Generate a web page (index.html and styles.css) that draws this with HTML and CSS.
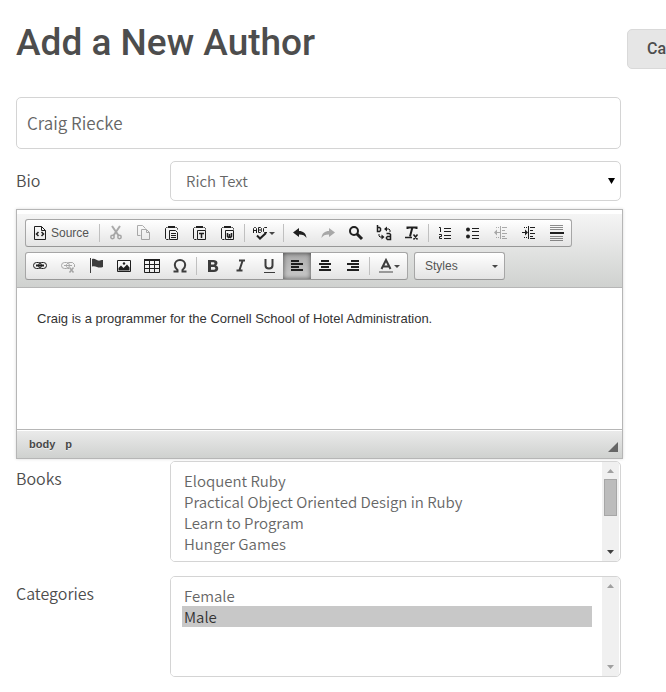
FILE: index.html
```html
<!DOCTYPE html>
<html lang="en">
<head>
<meta charset="utf-8">
<title>Add a New Author</title>
<link rel="stylesheet" href="styles.css">
</head>
<body>
<main class="page">
  <header class="page-header">
    <h1>Add a New Author</h1>
    <button class="cancel" type="button">Cancel</button>
  </header>
  <form class="author-form">
    <input class="field name-field" type="text" value="Craig Riecke" aria-label="Name">
    <div class="row bio-row">
      <label for="format">Bio</label>
      <div class="select-wrap">
        <select id="format" class="field format"><option>Rich Text</option></select>
        <svg class="caret" width="7" height="6" viewBox="0 0 7 6"><path d="M0 0h7L3.500 6z"/></svg>
      </div>
    </div>

    <section class="editor" aria-label="Bio editor">
      <div class="toolbar">
        <div class="group">
          <button type="button" class="tool source"><svg viewBox="0 0 16 16"><path d="M2.500 1.500h7l4 4v9h-11zM9.500 1.500v4h4" class="line"/><path d="M6.500 7L4.500 9l2 2M9.500 7l2 2-2 2" class="bold"/></svg><span>Source</span></button>
          <i class="sep"></i>
          <button type="button" class="tool off" title="Cut"><svg viewBox="0 0 16 16"><path d="M4 1l6.500 9.500M12 1L5.500 10.500" class="heavy"/><circle cx="4.500" cy="12" r="1.700" class="bold"/><circle cx="11.500" cy="12" r="1.700" class="bold"/></svg></button>
          <button type="button" class="tool off" title="Copy"><svg viewBox="0 0 16 16"><path d="M4.500 10.500h-3v-10h5l3 3M5.500 4.500h5l3 3v7h-8zM10.500 4.500v3h3" class="line"/></svg></button>
          <button type="button" class="tool" title="Paste"><svg viewBox="0 0 16 16"><path d="M3.500 2.500h-1l-1 1v10l1 1h2M11.500 2.500h1l1 1v1" class="line"/><path d="M4 1h7v2H4z"/><path d="M5.500 5.500h6l2 2v7h-8zM7 8.500h5M7 10.500h5M7 12.500h5" class="line"/></svg></button>
          <button type="button" class="tool" title="Paste as plain text"><svg viewBox="0 0 16 16"><path d="M3.500 2.500h-1l-1 1v10l1 1h2M11.500 2.500h1l1 1v1" class="line"/><path d="M4 1h7v2H4z"/><path d="M5.500 5.500h8v9h-8z" class="line"/><path d="M7 8.500h5M9.500 8v5" class="bold"/></svg></button>
          <button type="button" class="tool" title="Paste from Word"><svg viewBox="0 0 16 16"><path d="M3.500 2.500h-1l-1 1v10l1 1h2M11.500 2.500h1l1 1v1" class="line"/><path d="M4 1h7v2H4z"/><path d="M5.500 5.500h8v9h-8z" class="line"/><path d="M7.500 8v3.500l1 1 1-1V9v2.500l1 1 1-1V8" class="bold"/></svg></button>
          <i class="sep"></i>
          <button type="button" class="tool menu" title="Spell check"><svg viewBox="0 0 16 16"><path d="M.5 8V3.500l1-1h1l1 1V8M1 5.500h2M5.500 7.500v-5h2l1 1v1l-1 .5 1 .5v1l-1 1zM5.500 5h2M14 2.500h-2.500l-1 1v3l1 1H14" class="line"/><path d="M4 10.500l3 3L13 8" class="heavy"/></svg><svg class="arrow" viewBox="0 0 6 3"><path d="M0 0h6L3 3z"/></svg></button>
          <i class="sep"></i>
          <button type="button" class="tool" title="Undo"><svg viewBox="0 0 16 16"><path d="M1 7.500L7 3v3c4 0 7 2 7.500 7C13 10.500 11 9.500 7 9.500V12z"/></svg></button>
          <button type="button" class="tool off" title="Redo"><svg viewBox="0 0 16 16"><path d="M15 7.500L9 3v3c-4 0-7 2-7.500 7C3 10.500 5 9.500 9 9.500V12z"/></svg></button>
          <button type="button" class="tool" title="Find"><svg viewBox="0 0 16 16"><circle cx="6" cy="6" r="4" class="heavy"/><path d="M9 9l5 5" class="thick"/></svg></button>
          <button type="button" class="tool" title="Replace"><svg viewBox="0 0 16 16"><path d="M1.500 0v6.500h2l1-1v-2l-1-1H2M10.500 8.500h3l1 1v5h-3l-1-1v-1l1-1h3" class="bold"/><path d="M10 4h3l1 1v2M6 12H4l-1-1V9" class="line"/><path d="M8 4l3-2.500v5zM8.500 12l-3-2.500v5z"/></svg></button>
          <button type="button" class="tool" title="Remove format"><svg viewBox="0 0 16 16"><path d="M3.500 4V2.500h9V4M8.500 2L6 11.500" class="heavy"/><path d="M1 12.500h7M9.500 9.500l4 5M13.500 9.500l-4 5" class="bold"/></svg></button>
          <i class="sep"></i>
          <button type="button" class="tool" title="Numbered list"><svg viewBox="0 0 16 16"><path d="M2 2.500h1.500V7M2 9.500h2.500v2h-2v2H5" class="line"/><path d="M7 3.500h7M7 6.500h7M7 10.500h7M7 13.500h7" class="line"/></svg></button>
          <button type="button" class="tool" title="Bulleted list"><svg viewBox="0 0 16 16"><circle cx="3" cy="4.500" r="2"/><circle cx="3" cy="11.500" r="2"/><path d="M7 3.500h7M7 6.500h7M7 10.500h7M7 13.500h7" class="line"/></svg></button>
          <button type="button" class="tool off" title="Decrease indent"><svg viewBox="0 0 16 16"><path d="M7.500 1v13M9 2.500h5M9 5.500h3M9 8.500h5M9 11.500h3M9 13.500h5M3 7.500h4M3 2.500h1M5 2.500h1M3 12.500h1M5 12.500h1" class="line"/><path d="M1 7.500l3-3v6z"/></svg></button>
          <button type="button" class="tool" title="Increase indent"><svg viewBox="0 0 16 16"><path d="M7.500 1v13M9 2.500h5M9 5.500h3M9 8.500h5M9 11.500h3M9 13.500h5M1 7.500h4M3 2.500h1M5 2.500h1M3 12.500h1M5 12.500h1" class="line"/><path d="M7 7.500l-3-3v6z"/></svg></button>
          <button type="button" class="tool" title="Page break"><svg viewBox="0 0 16 16"><path d="M1 .5h13M1 2.500h13M1 4.500h13M1 11.500h13M1 13.500h13M1 15.500h13" class="line soft"/><path d="M1 7h14v2H1z"/></svg></button>
        </div>
        <div class="group">
          <button type="button" class="tool" title="Link"><svg viewBox="0 0 16 16"><rect x="1.500" y="4.500" width="8" height="6" rx="3" class="line"/><rect x="6.500" y="4.500" width="8" height="6" rx="3" class="line"/><path d="M4 7.500h8" class="heavy"/></svg></button>
          <button type="button" class="tool off" title="Unlink"><svg viewBox="0 0 16 16"><rect x="1.500" y="4.500" width="8" height="6" rx="3" class="line"/><path d="M9 10.500H8l-1.500-2v-2l2-2h4l2 2V9M4 7.500h8" class="line"/><path d="M9.500 9.500l4 5M13.500 9.500l-4 5" class="bold"/></svg></button>
          <button type="button" class="tool dark" title="Anchor"><svg viewBox="0 0 16 16"><path d="M2.500 0v15" class="line"/><path d="M4 1c3-1 4 1 6 1.500 1.500.5 3-.5 5-.5v7c-2 .5-4 1-6 0-2-.8-3-1-5-.5z"/></svg></button>
          <button type="button" class="tool" title="Image"><svg viewBox="0 0 16 16"><path d="M1.500 2.500h13v11h-13z" class="line"/><path d="M2.500 12.500V10L5 7.500 7.500 10 11 6.500l2.500 3v3z"/><circle cx="8" cy="5.500" r="1.200"/></svg></button>
          <button type="button" class="tool" title="Table"><svg viewBox="0 0 16 16"><path d="M.5 1.500h15v13H.5zM.5 6.500h15M.5 10.500h15M5.500 3v12M10.500 3v12" class="line"/><path d="M0 1h16v2H0z"/></svg></button>
          <button type="button" class="tool dark" title="Special character"><svg viewBox="0 0 16 16"><path d="M1.500 13.500h4V12C3.500 10.500 2.800 9 2.800 7c0-3 2.200-5 5.200-5s5.200 2 5.200 5c0 2-.7 3.500-2.700 5v1.500h4" class="heavy"/></svg></button>
          <i class="sep"></i>
          <button type="button" class="tool dark" title="Bold"><svg viewBox="0 0 16 16"><path d="M3 2h5.500c4.500 0 5 4 2.500 5.500 3.500 1 3 6.500-2 6.500H3zM6 4.200v2.300h2c2 0 2-2.300 0-2.300zM6 9v2.800h2.500c2.500 0 2.500-2.800 0-2.800z" fill-rule="evenodd"/></svg></button>
          <button type="button" class="tool dark" title="Italic"><svg viewBox="0 0 16 16"><path d="M6 2.500h6M3.500 12.500h6M9.500 3L6.500 12" class="heavy"/></svg></button>
          <button type="button" class="tool dark" title="Underline"><svg viewBox="0 0 16 16"><path d="M4.500 1v6.500c0 4 7 4 7 0V1" class="heavy"/><path d="M3 14.500h11" class="line"/></svg></button>
          <button type="button" class="tool on" title="Align left"><svg viewBox="0 0 16 16"><path d="M2 3h8M2 6h12M2 9h8M2 12h12" class="bar"/></svg></button>
          <button type="button" class="tool" title="Center"><svg viewBox="0 0 16 16"><path d="M4 3h8M2 6h12M4 9h8M2 12h12" class="bar"/></svg></button>
          <button type="button" class="tool" title="Align right"><svg viewBox="0 0 16 16"><path d="M6 3h8M2 6h12M6 9h8M2 12h12" class="bar"/></svg></button>
          <i class="sep"></i>
          <button type="button" class="tool menu color dark" title="Text color"><svg viewBox="0 0 16 16"><path d="M3.500 11L8 2l4.500 9M5.500 8.500h5" class="heavy"/><path d="M1 13h14v2H1z" class="swatch"/></svg><svg class="arrow" viewBox="0 0 6 3"><path d="M0 0h6L3 3z"/></svg></button>
        </div>
        <button type="button" class="combo"><span>Styles</span><svg class="arrow" viewBox="0 0 6 3"><path d="M0 0h6L3 3z"/></svg></button>
      </div>
      <div class="content" contenteditable="true" role="textbox" aria-label="Bio text"><p>Craig is a programmer for the Cornell School of Hotel Administration.</p></div>
      <footer class="statusbar">
        <a href="#body">body</a><a href="#p">p</a>
        <svg class="resizer" width="10" height="10" viewBox="0 0 10 10"><path d="M10 0v10H0z"/></svg>
      </footer>
    </section>

    <div class="row list-row">
      <label for="books">Books</label>
      <div class="listbox">
        <select id="books" multiple>
          <option>Eloquent Ruby</option>
          <option>Practical Object Oriented Design in Ruby</option>
          <option>Learn to Program</option>
          <option>Hunger Games</option>
        </select>
        <div class="scrollbar">
          <svg class="step idle" viewBox="0 0 7 4"><path d="M0 4h7L3.500 0z"/></svg>
          <div class="thumb"></div>
          <svg class="step" viewBox="0 0 7 4"><path d="M0 0h7L3.500 4z"/></svg>
        </div>
      </div>
    </div>
    <div class="row list-row">
      <label for="categories">Categories</label>
      <div class="listbox">
        <select id="categories" multiple>
          <option>Female</option>
          <option selected>Male</option>
        </select>
        <div class="scrollbar">
          <svg class="step idle" viewBox="0 0 7 4"><path d="M0 4h7L3.500 0z"/></svg>
          <svg class="step idle" viewBox="0 0 7 4"><path d="M0 0h7L3.500 4z"/></svg>
        </div>
      </div>
    </div>
  </form>
</main>
</body>
</html>
```

FILE: styles.css
```css
* { box-sizing: border-box; }

body {
  margin: 0;
  background: #fff;
  color: #4d4d4d;
  font-family: "Noto Sans CJK SC", "Open Sans", sans-serif;
  font-size: 16px;
  font-weight: 350;
  overflow-x: hidden;
}

.page { padding: 16px 45px 14px 16px; overflow: hidden; }

.page-header {
  display: flex;
  justify-content: space-between;
  align-items: flex-start;
  height: 81px;
  margin-right: -94px;
}

h1 {
  margin: 0;
  font: 500 37px/54px Roboto, sans-serif;
  white-space: nowrap;
}

.cancel {
  width: 88px;
  height: 40px;
  margin-top: 13px;
  padding: 0 19px;
  border: 1px solid #d9d9d9;
  border-radius: 5px;
  background: #e6e6e6;
  color: #4d4d4d;
  font: 500 16px/20px Roboto, sans-serif;
  text-align: left;
}

.field {
  display: block;
  width: 100%;
  border: 1px solid #d4d4d4;
  border-radius: 5px;
  background: #fff;
  color: #666;
  font-family: inherit;
  font-weight: inherit;
}

.name-field { height: 52px; padding: 0 10px 2px; font-size: 17px; }

.row {
  display: grid;
  grid-template-columns: 154px 1fr;
  align-items: start;
}

.row label { font-size: 16px; line-height: 24px; }

.bio-row { margin: 12px 0 8px; }
.bio-row label { padding-top: 7px; }

.select-wrap { position: relative; }

.format { appearance: none; height: 40px; padding: 0 15px 2px; font-size: 15px; }

.caret {
  position: absolute;
  right: 6px;
  top: 17px;
  fill: #000;
  pointer-events: none;
}

/* Rich text editor */
.editor {
  margin-right: -2px;
  border: 1px solid #b6b6b6;
  box-shadow: 0 0 3px rgba(0, 0, 0, .15);
  font-family: "Liberation Sans", Arial, sans-serif;
  background: #fff;
}

.toolbar {
  display: flex;
  flex-wrap: wrap;
  gap: 5px 6px;
  padding: 5px 8px 7px;
  border-top: 4px solid #fff;
  border-bottom: 1px solid #b6b6b6;
  background: linear-gradient(#f5f5f5, #cfd1cf) padding-box;
}

.group, .combo {
  display: flex;
  align-items: center;
  height: 28px;
  border: 1px solid #a6a6a6;
  border-bottom-color: #979797;
  border-radius: 3px;
  background: linear-gradient(#fff, #e4e4e4);
}

.tool {
  display: flex;
  align-items: center;
  width: 28px;
  height: 26px;
  padding: 0 6px;
  border: 0;
  background: none;
  color: #1f1f1f;
}

.tool svg { flex: none; width: 16px; height: 16px; }
.tool .arrow, .combo .arrow { width: 6px; height: 3px; color: #474747; }
.tool.menu { width: 34px; }
.tool.color { width: 35px; }
.tool.dark { color: #3c3c3c; }
.tool.off { opacity: .35; }

.tool.on {
  background: linear-gradient(#aaa, #cacaca);
  box-shadow: 0 0 5px rgba(0, 0, 0, .6) inset;
}

.tool.source { width: 71px; gap: 3px; }

.source span, .combo span {
  color: #545454;
  font: 12px/16px "Liberation Sans", Arial, sans-serif;
}

.combo { width: 91px; padding: 0 6px 0 10px; justify-content: space-between; }

.sep { width: 1px; height: 18px; margin: 0 2px; background: #c0c0c0; }

svg { display: block; fill: currentColor; }
.line, .bold, .heavy, .thick, .bar { fill: none; stroke: currentColor; stroke-width: 1px; }
.bold { stroke-width: 1.5px; }
.heavy { stroke-width: 2px; }
.thick { stroke-width: 3px; }
.bar { stroke-width: 2px; }
.soft { opacity: .5; }
.swatch { fill: #999; }

.content {
  min-height: 141px;
  padding: 21px 20px 20px;
  color: #333;
  font-size: 13px;
  font-weight: 400;
  line-height: 20px;
}

.content p { margin: 0; }

.statusbar {
  display: flex;
  align-items: center;
  gap: 10px;
  height: 29px;
  padding: 0 4px 0 12px;
  border-top: 1px solid #b6b6b6;
  background: linear-gradient(#ebebeb, #cfd1cf);
  box-shadow: 0 1px 0 #fff inset;
}

.statusbar a {
  color: #484848;
  font-size: 11px;
  font-weight: bold;
  text-decoration: none;
  text-shadow: 0 1px 0 rgba(255, 255, 255, .5);
}

.resizer { align-self: flex-end; margin: 0 0 6px auto; color: #666; }

/* List boxes */
.list-row { margin: 2px 0 14px; }
.list-row label { padding-top: 5px; }

.listbox {
  display: flex;
  height: 101px;
  padding-right: 1px;
  border: 1px solid #d4d4d4;
  border-radius: 5px;
  background: #fff;
  overflow: hidden;
}

.listbox select {
  flex: 1;
  height: 99px;
  padding: 8px 10px 7px 11px;
  border: 0;
  background: #fff;
  color: #666;
  font-family: inherit;
  font-size: 14px;
  overflow: hidden;
  outline: 0;
}

.listbox option {
  height: 21px;
  min-height: 21px;
  padding: 0 2px;
  font-size: 15px;
  font-weight: 350;
  line-height: 21px;
}

.listbox option:checked {
  background: linear-gradient(#c8c8c8, #c8c8c8);
  color: #333;
}

.scrollbar {
  display: flex;
  flex-direction: column;
  width: 17px;
  padding: 7px 2px;
  background: #f0f0f0;
}

.step { width: 7px; height: 4px; margin: 0 auto; color: #404040; }
.step:last-child { margin-top: auto; }
.step.idle { color: #a0a0a0; }
.thumb { height: 37px; margin-top: 6px; border: 1px solid #a6a6a6; background: #bcbcbc; }
```
